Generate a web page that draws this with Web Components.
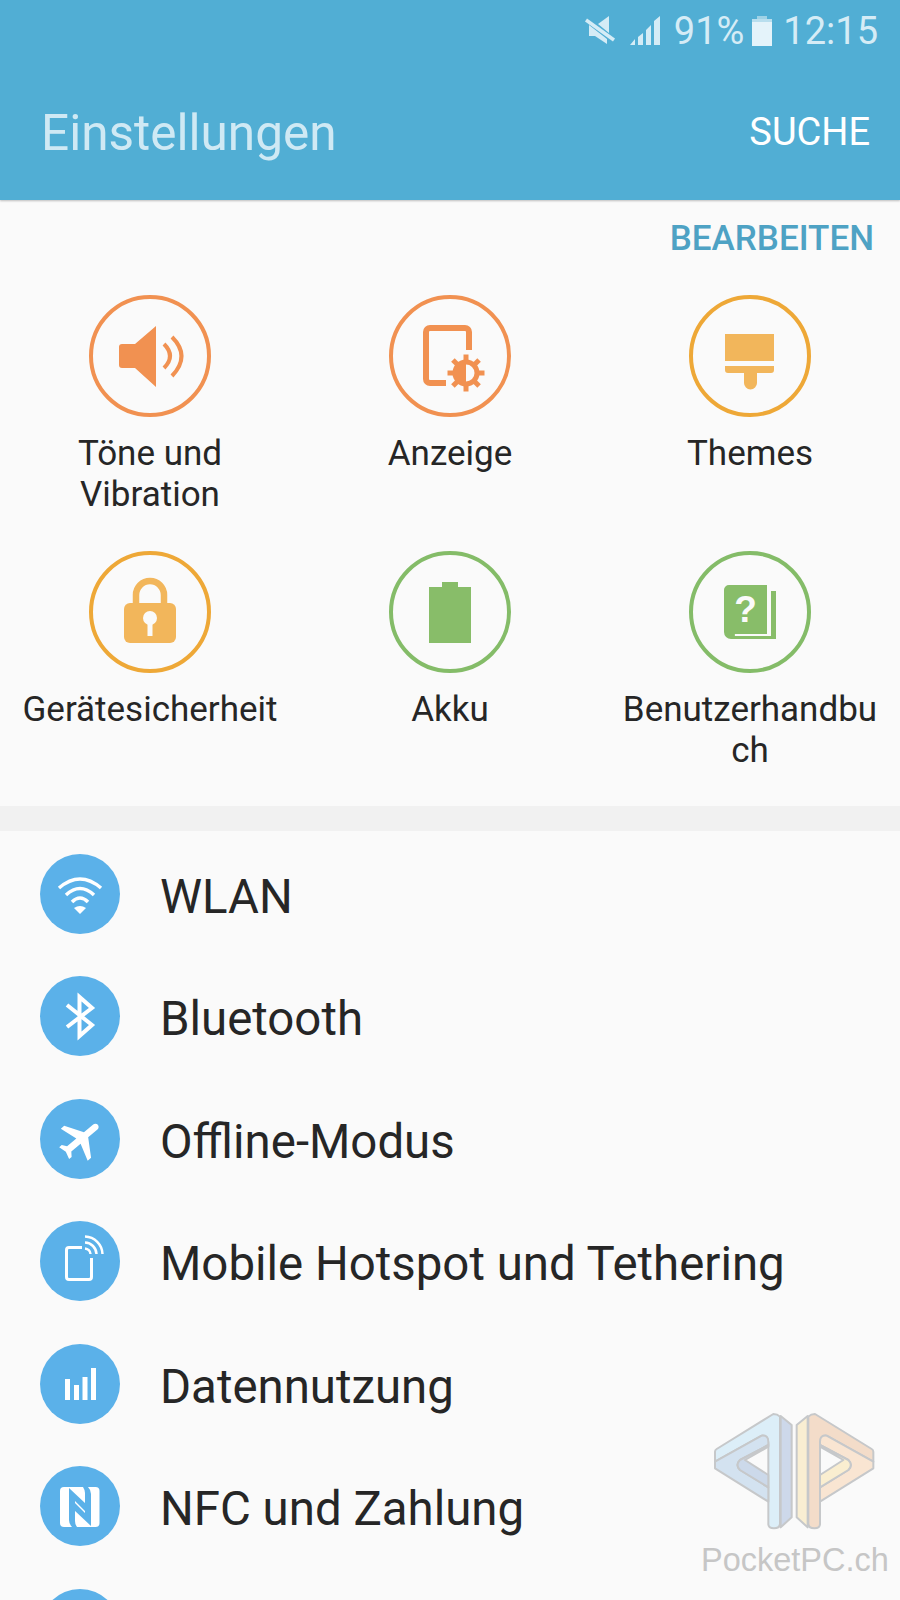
<!DOCTYPE html>
<html lang="de">
<head>
<meta charset="utf-8">
<title>Einstellungen</title>
<style>
  html, body { margin: 0; height: 1600px; overflow: hidden; background: #fafafa; }
  body { font-family: Roboto, "Noto Sans", sans-serif; position: relative; }
</style>
</head>
<body>
<settings-header title-text="Einstellungen" action="SUCHE"></settings-header>
<edit-row>BEARBEITEN</edit-row>
<quick-grid>
  <quick-tile icon="sound" tone="orange">Töne und Vibration</quick-tile>
  <quick-tile icon="display" tone="orange">Anzeige</quick-tile>
  <quick-tile icon="themes" tone="amber">Themes</quick-tile>
  <quick-tile icon="lock" tone="amber">Gerätesicherheit</quick-tile>
  <quick-tile icon="battery" tone="green">Akku</quick-tile>
  <quick-tile icon="manual" tone="green">Benutzerhandbuch</quick-tile>
</quick-grid>
<settings-list>
  <list-row icon="wifi">WLAN</list-row>
  <list-row icon="bluetooth">Bluetooth</list-row>
  <list-row icon="plane">Offline-Modus</list-row>
  <list-row icon="hotspot">Mobile Hotspot und Tethering</list-row>
  <list-row icon="data">Datennutzung</list-row>
  <list-row icon="nfc">NFC und Zahlung</list-row>
  <list-row></list-row>
</settings-list>
<water-mark></water-mark>

<script>
const TILE_ICONS = {
  sound: `<path d="M33 49H46L67 31V92L46 73H33a3 3 0 0 1-3-3V52a3 3 0 0 1 3-3z" fill="currentColor"/>
    <path d="M75 49Q87 61 75 73M83 42Q102 61 83 81" fill="none" stroke="currentColor" stroke-width="4"/>`,
  display: `<path d="M80 55V37a4 4 0 0 0-4-4H41a4 4 0 0 0-4 4V84a4 4 0 0 0 4 4H57" fill="none" stroke="currentColor" stroke-width="6"/>
    <g transform="translate(77 78)" fill="currentColor">
      <rect x="-2.500" y="-18.500" width="5" height="37"/><rect x="-18.500" y="-2.500" width="37" height="5"/>
      <rect x="-2.500" y="-18.500" width="5" height="37" transform="rotate(45)"/><rect x="-2.500" y="-18.500" width="5" height="37" transform="rotate(-45)"/>
      <circle r="13.500"/>
      <path d="M0-8.500A8.500 8.500 0 0 1 0 8.500z" fill="#fafafa"/>
    </g>`,
  themes: `<g fill="#f2b65b"><rect x="36" y="39" width="49" height="27"/>
    <path d="M36 71H85V75a3 3 0 0 1-3 3H68V88a6.500 6.500 0 0 1-13 0V78H39a3 3 0 0 1-3-3z"/></g>`,
  lock: `<path d="M47 54V44a14 14 0 0 1 28 0V54" fill="none" stroke="#f2b65b" stroke-width="6.500"/>
    <rect x="35" y="52" width="52" height="40" rx="6" fill="#f2b65b"/>
    <circle cx="61" cy="67" r="7" fill="#fafafa"/><rect x="58.500" y="68" width="5" height="17" fill="#fafafa"/>`,
  battery: `<path d="M53 31H69V36H82V92H40V36H53z" fill="currentColor"/>`,
  manual: `<path d="M40 34H78V83H46a2.500 2.500 0 0 0 0 2H46V88H42a7 7 0 0 1-7-7V39a5 5 0 0 1 5-5z" fill="currentColor"/>
    <path d="M82 40H87V88H44V85H82z" fill="currentColor"/>
    <text x="56.500" y="71" text-anchor="middle" font-family="'Liberation Sans', sans-serif" font-weight="700" font-size="37" fill="#fafafa">?</text>`
};

const LIST_ICONS = {
  wifi: `<g fill="none" stroke="#fff" stroke-width="3.500">
      <path d="M19 34Q40 16 61 34"/><path d="M26 41Q40 28 54 41"/><path d="M32 48Q40 40 48 48"/></g>
    <path d="M34 54Q40 50 46 54L40 60z" fill="#fff"/>`,
  bluetooth: `<path d="M27 29L52 49L39.500 60V21L52 32L27 51" fill="none" stroke="#fff" stroke-width="4"/>`,
  plane: `<path transform="translate(41 40) rotate(50) scale(2.2) translate(-11.500 -12)" fill="#fff" d="M21 16v-2l-8-5V3.500c0-.83-.67-1.500-1.500-1.500S10 2.670 10 3.500V9l-8 5v2l8-2.500V19l-2 1.500V22l3.500-1 3.500 1v-1.500L13 19v-5.500l8 2.500z"/>`,
  hotspot: `<path d="M42 26.500H29a2.500 2.500 0 0 0-2.500 2.500V56a2.500 2.500 0 0 0 2.500 2.500H49a2.500 2.500 0 0 0 2.500-2.500V37" fill="none" stroke="#fff" stroke-width="3"/>
    <g fill="none" stroke="#fff" stroke-width="2.500"><path d="M45 15.500A18 18 0 0 1 62.500 33"/><path d="M45 21.500A12 12 0 0 1 56.500 33"/><path d="M45 27.500A6 6 0 0 1 50.500 33"/></g>`,
  data: `<g fill="#fff"><rect x="25" y="35" width="5" height="21"/><rect x="34" y="41" width="5" height="15"/><rect x="42.500" y="33" width="5" height="23"/><rect x="51" y="24" width="5" height="32"/></g>`,
  nfc: `<rect x="20" y="21" width="39.500" height="40" rx="4" fill="#fff"/>
    <g fill="#5bb1e9">
      <path d="M29 22L46 38V46L35 35V55Q35 58 37 61H32Q29 58 29 54z"/>
      <path d="M51 60L34 44V36L45 47V27Q45 24 43 21H48Q51 24 51 28z"/>
    </g>`
};

class SettingsHeader extends HTMLElement {
  constructor() {
    super();
    const root = this.attachShadow({ mode: 'open' });
    root.innerHTML = `
      <style>
        :host { display: block; height: 200px; background: #51aed4; box-shadow: 0 1px 2px rgba(0,0,0,.25); position: relative; }
        .status { display: flex; justify-content: flex-end; align-items: center; height: 62px; padding-right: 22px; color: #d5ecf6; font-size: 38px; }
        .status svg { display: block; }
        .signal { margin-left: 14.500px; margin-right: 14px; }
        .battery { margin-left: 8px; margin-right: 11px; }
        .title { display: flex; justify-content: space-between; align-items: center; height: 138px; padding: 4px 30px 0 41px; box-sizing: border-box; }
        h1 { margin: 0; font-size: 49.500px; font-weight: 400; color: #cfe9f4; }
        .action { font-size: 38px; color: #fff; padding-bottom: 2px; }
      </style>
      <div class="status">
        <svg width="30" height="30" viewBox="0 0 30 30" fill="#d5ecf6"><path d="M13 8L24 0V17zM4 9L22 23V28L10 20H4z"/><path d="M1 4L29 24" stroke="#d5ecf6" stroke-width="3.500"/></svg>
        <svg class="signal" width="30" height="30" viewBox="0 0 30 30" fill="#d5ecf6"><path d="M0 29L5 23V29zM8 29V21L13 17V29zM16 29V14L21 9V29zM24 29V5L30 0V29z"/></svg>
        <span>91%</span>
        <svg class="battery" width="20" height="30" viewBox="0 0 20 30"><rect x="5" y="0" width="10" height="4" fill="#9fd2e6"/><rect x="0" y="3" width="20" height="3" fill="#b8deee"/><rect x="0" y="6" width="20" height="24" fill="#e4f3fa"/></svg>
        <span>12:15</span>
      </div>
      <div class="title"><h1></h1><span class="action"></span></div>`;
    root.querySelector('h1').textContent = this.getAttribute('title-text');
    root.querySelector('.action').textContent = this.getAttribute('action');
  }
}
customElements.define('settings-header', SettingsHeader);

class EditRow extends HTMLElement {
  constructor() {
    super();
    this.attachShadow({ mode: 'open' }).innerHTML = `
      <style>
        :host { display: flex; justify-content: flex-end; align-items: center; height: 76px; padding-right: 26px; box-sizing: border-box; font-size: 35px; font-weight: 500; color: #4ea2c4; }
      </style><slot></slot>`;
  }
}
customElements.define('edit-row', EditRow);

class QuickGrid extends HTMLElement {
  constructor() {
    super();
    this.attachShadow({ mode: 'open' }).innerHTML = `
      <style>
        :host { display: grid; grid-template-columns: repeat(3, 300px); grid-auto-rows: 220px; row-gap: 36px; padding: 19px 0 35px; }
      </style><slot></slot>`;
  }
}
customElements.define('quick-grid', QuickGrid);

class QuickTile extends HTMLElement {
  constructor() {
    super();
    const tones = { orange: ['#f19151', '#f19151'], amber: ['#eea837', '#f2b65b'], green: ['#84bc68', '#88bd69'] };
    const [ring, fill] = tones[this.getAttribute('tone')];
    const root = this.attachShadow({ mode: 'open' });
    root.innerHTML = `
      <style>
        :host { display: flex; flex-direction: column; align-items: center; gap: 16px; color: #262626; font-size: 35px; line-height: 41px; text-align: center; }
        svg { display: block; flex: none; color: ${fill}; }
        .label { width: 264px; overflow-wrap: anywhere; }
      </style>
      <svg width="122" height="122" viewBox="0 0 122 122">
        <circle cx="61" cy="61" r="59" fill="none" stroke="${ring}" stroke-width="4"/>
        ${TILE_ICONS[this.getAttribute('icon')]}
      </svg>
      <div class="label"><slot></slot></div>`;
  }
}
customElements.define('quick-tile', QuickTile);

class SettingsList extends HTMLElement {
  constructor() {
    super();
    this.attachShadow({ mode: 'open' }).innerHTML = `
      <style>
        :host { display: block; box-sizing: border-box; height: 794px; overflow: hidden; border-top: 25px solid #f1f1f1; padding-top: 1.500px; }
      </style><slot></slot>`;
  }
}
customElements.define('settings-list', SettingsList);

class ListRow extends HTMLElement {
  constructor() {
    super();
    const icon = LIST_ICONS[this.getAttribute('icon')] || '';
    this.attachShadow({ mode: 'open' }).innerHTML = `
      <style>
        :host { display: flex; align-items: center; gap: 40px; height: 122.500px; padding-left: 40px; font-size: 47.400px; color: #262626; }
        svg { display: block; flex: none; }
        .label { padding-top: 6px; }
      </style>
      <svg width="80" height="80" viewBox="0 0 80 80"><circle cx="40" cy="40" r="40" fill="#5bb1e9"/>${icon}</svg>
      <div class="label"><slot></slot></div>`;
  }
}
customElements.define('list-row', ListRow);

class WaterMark extends HTMLElement {
  constructor() {
    super();
    const half = (top, low, inner, bar) => `
      <path d="M250 42Q262 42 270 50V372Q268 385 252 385Q235 385 235 372V130Q235 105 215 107L75 185V155Q75 150 80 147z" fill="${top}"/>
      <path d="M75 185V205L235 305V262L150 210Q135 195 150 180L235 135V125Q235 105 215 107z" fill="${low}"/>
      <path d="M150 180Q135 195 150 210L235 262V225L165 180L235 140V135z" fill="${inner}"/>
      <path d="M272 48L305 75V352L272 382z" fill="${bar}"/>`;
    this.attachShadow({ mode: 'open' }).innerHTML = `
      <style>
        :host { position: absolute; left: 690px; top: 1400px; width: 210px; display: flex; flex-direction: column; font-family: "Liberation Sans", Arial, sans-serif; font-size: 32.500px; color: #c6c6c6; }
        svg { display: block; }
        span { padding-left: 11px; line-height: 40px; margin-top: 6px; }
      </style>
      <svg width="210" height="134" viewBox="0 0 630 402" stroke-linejoin="round">
        <g stroke="#c6c8ca" stroke-width="6">
          ${half('#dceef8', '#d3e2f0', '#ccd9ea', '#cdd8ea')}
          <g transform="translate(625 0) scale(-1 1)">${half('#f3dcc9', '#f9e5d2', '#faeed0', '#f9eed2')}</g>
        </g>
      </svg>
      <span>PocketPC.ch</span>`;
  }
}
customElements.define('water-mark', WaterMark);
</script>
</body>
</html>
